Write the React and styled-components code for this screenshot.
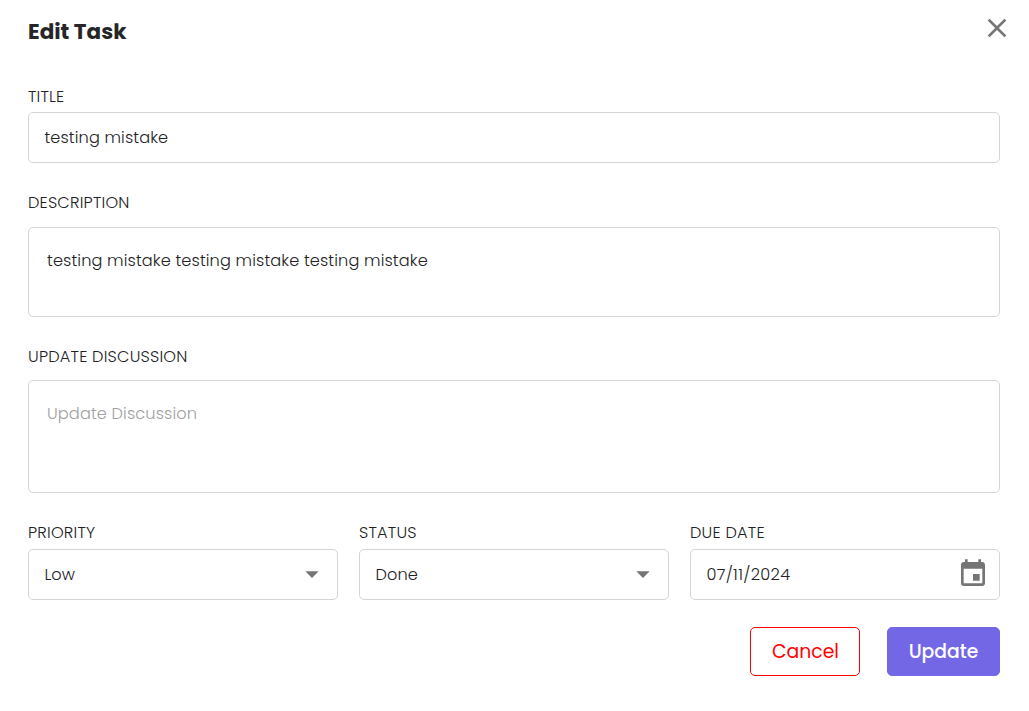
import React from "react";
import styled, { createGlobalStyle } from "styled-components";

const GlobalStyle = createGlobalStyle`
  *, *::before, *::after { box-sizing: border-box; }
  body {
    margin: 0;
    background: #fff;
    color: #262628;
    font-family: Poppins, Inter, "Open Sans", sans-serif;
  }
`;

const Dialog = styled.main`
  width: 1029px;
  height: 711px;
  padding: 12px 29px 0 28px;
  display: flex;
  flex-direction: column;
  overflow: hidden;
`;

const Header = styled.header`
  display: flex;
  justify-content: space-between;
  align-items: flex-start;
  height: 75px;
  margin-right: -13px;
`;

const Heading = styled.h1`
  margin: 4px 0 0;
  font-size: 21.5px;
  line-height: 32px;
  font-weight: 700;
  color: #262628;
`;

const IconButton = styled.button`
  display: flex;
  padding: 0;
  border: 0;
  background: none;
  color: #757575;
`;

const Field = styled.section`
  display: flex;
  flex-direction: column;
  min-width: 0;
  margin-bottom: ${(p) => p.$after || 0}px;
`;

const Label = styled.label`
  height: 20px;
  line-height: 20px;
  margin-bottom: ${(p) => p.$below}px;
  color: #222224;
  font-size: 16.16px;
  font-weight: 300;
  letter-spacing: 0.2px;
  white-space: nowrap;
`;

const Control = styled.div`
  display: flex;
  align-items: center;
  justify-content: space-between;
  height: 51px;
  padding: 0 ${(p) => p.$end || 9}px 0 15.4px;
  border: 1px solid #d5d5d5;
  border-radius: 5px;
  color: #222224;
  font-size: 16.16px;
  font-weight: 300;
  line-height: 24px;
  letter-spacing: 0.13px;
`;

const TextArea = styled(Control)`
  align-items: flex-start;
  height: ${(p) => p.$height}px;
  padding: 21px 18px;
  color: ${(p) => (p.$placeholder ? "#a0a0a0" : "#222224")};
`;

const Text = styled.span`
  white-space: nowrap;
`;

const DateText = styled(Text)`
  letter-spacing: 0.34px;
`;

const Row = styled.div`
  display: grid;
  grid-template-columns: repeat(3, 310px);
  gap: 21px;
`;

const Actions = styled.footer`
  display: flex;
  justify-content: flex-end;
  gap: 27px;
  margin-top: 27px;
`;

const Button = styled.button`
  width: ${(p) => p.$width}px;
  height: 49px;
  padding: 0 0 0 ${(p) => (p.$primary ? 0 : 1)}px;
  border: 1px solid ${(p) => (p.$primary ? "#7367e5" : "#f00")};
  border-radius: 5px;
  background: ${(p) => (p.$primary ? "#7367e5" : "#fff")};
  color: ${(p) => (p.$primary ? "#fff" : "#f00")};
  font: inherit;
  font-size: 18.8px;
  font-weight: ${(p) => (p.$primary ? 500 : 400)};
`;

const Svg = styled.svg`
  width: 32px;
  height: 32px;
  flex: none;
  fill: #757575;
  margin-bottom: ${(p) => p.$lift || 0}px;
`;

const paths = {
  close:
    "M19 6.41 17.59 5 12 10.59 6.41 5 5 6.41 10.59 12 5 17.59 6.41 19 12 13.41 17.59 19 19 17.59 13.41 12z",
  down: "m7 10 5 5 5-5z",
  event:
    "M17 12h-5v5h5v-5zM16 1v2H8V1H6v2H5c-1.11 0-1.99.9-1.99 2L3 19c0 1.1.89 2 2 2h14c1.1 0 2-.9 2-2V5c0-1.1-.9-2-2-2h-1V1h-2zm3 18H5V8h14v11z",
};

const Icon = ({ name, lift }) => (
  <Svg viewBox="0 0 24 24" aria-hidden="true" $lift={lift}>
    <path d={paths[name]} />
  </Svg>
);

export default function App() {
  return (
    <>
      <GlobalStyle />
      <Dialog>
        <Header>
          <Heading>Edit Task</Heading>
          <IconButton aria-label="Close">
            <Icon name="close" />
          </IconButton>
        </Header>
        <Field $after={30}>
          <Label $below={5}>TITLE</Label>
          <Control><Text>testing mistake</Text></Control>
        </Field>
        <Field $after={30}>
          <Label $below={14}>DESCRIPTION</Label>
          <TextArea $height={90}>
            <Text>testing mistake testing mistake testing mistake</Text>
          </TextArea>
        </Field>
        <Field $after={30}>
          <Label $below={13}>UPDATE DISCUSSION</Label>
          <TextArea $height={113} $placeholder>
            <Text>Update Discussion</Text>
          </TextArea>
        </Field>
        <Row>
          <Field>
            <Label $below={6}>PRIORITY</Label>
            <Control><Text>Low</Text><Icon name="down" lift={2} /></Control>
          </Field>
          <Field>
            <Label $below={6}>STATUS</Label>
            <Control><Text>Done</Text><Icon name="down" lift={2} /></Control>
          </Field>
          <Field>
            <Label $below={6}>DUE DATE</Label>
            <Control $end={10}><DateText>07/11/2024</DateText><Icon name="event" lift={2} /></Control>
          </Field>
        </Row>
        <Actions>
          <Button $width={110}>Cancel</Button>
          <Button $width={113} $primary>Update</Button>
        </Actions>
      </Dialog>
    </>
  );
}
